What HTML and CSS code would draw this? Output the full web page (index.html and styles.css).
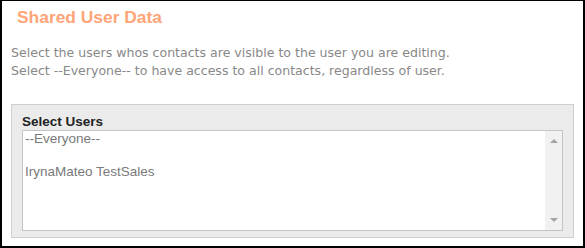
FILE: index.html
```html
<!DOCTYPE html>
<html>
<head>
<meta charset="utf-8">
<link rel="stylesheet" href="styles.css">
</head>
<body>
<div class="frame">
  <h1 class="title">Shared User Data</h1>
  <p class="desc">Select the users whos contacts are visible to the user you are editing.<br>Select --Everyone-- to have access to all contacts, regardless of user.</p>
  <div class="panel">
    <div class="label">Select Users</div>
    <div class="listbox">
      <div class="options">
        <div class="option">--Everyone--</div>
        <div class="option"></div>
        <div class="option">IrynaMateo TestSales</div>
      </div>
      <div class="scrollbar">
        <span class="arrow up"></span>
        <span class="arrow down"></span>
      </div>
    </div>
  </div>
</div>
</body>
</html>
```
FILE: styles.css
```css
html, body {
  margin: 0;
  padding: 0;
  background: #fff;
}
.frame {
  box-sizing: border-box;
  width: 585px;
  height: 248px;
  border-style: solid;
  border-color: #000;
  border-width: 1px 2px 2px 2px;
  display: flex;
  flex-direction: column;
  overflow: hidden;
}
.title {
  margin: 6px 0 0 15px;
  font-family: "Liberation Sans", Arial, sans-serif;
  font-weight: bold;
  font-size: 17.4px;
  line-height: 20px;
  color: #ffa577;
}
.desc {
  margin: 17px 0 0 9px;
  font-family: "DejaVu Sans", Verdana, sans-serif;
  font-size: 12.55px;
  line-height: 18px;
  color: #888;
}
.panel {
  margin: 24px 9px 0 9px;
  border: 1px solid #cfcfcf;
  background: #ebebeb;
  padding: 9px 10px 6px 10px;
  display: flex;
  flex-direction: column;
}
.label {
  font-family: "Liberation Sans", Arial, sans-serif;
  font-weight: bold;
  font-size: 13.5px;
  line-height: 16px;
  color: #222;
}
.listbox {
  box-sizing: border-box;
  height: 101px;
  border: 1px solid #c4c4c4;
  background: #fff;
  display: flex;
}
.options {
  flex: 1;
  padding: 0 2px;
}
.option {
  font-family: "Liberation Sans", Arial, sans-serif;
  font-size: 13.5px;
  line-height: 16.5px;
  height: 16.5px;
  color: #7a7a7a;
}
.scrollbar {
  width: 17px;
  background: #f1f1f1;
  display: flex;
  flex-direction: column;
  justify-content: space-between;
  align-items: center;
  padding: 8px 0 8px 0;
}
.arrow {
  width: 0;
  height: 0;
  border-left: 4px solid transparent;
  border-right: 4px solid transparent;
}
.arrow.up {
  border-bottom: 4px solid #a3a3a3;
}
.arrow.down {
  border-top: 4px solid #a3a3a3;
}
```
